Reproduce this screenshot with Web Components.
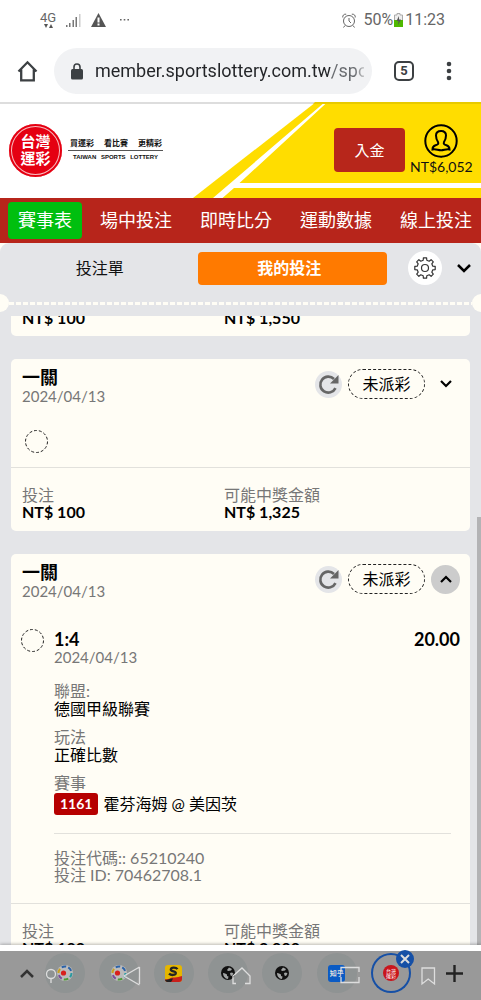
<!DOCTYPE html>
<html lang="zh-Hant">
<head>
<meta charset="utf-8">
<meta name="viewport" content="width=device-width, initial-scale=1">
<title>台灣運彩</title>
<style>
html, body { margin: 0; height: 100%; }
body { font: 16px/17px Lato, "Noto Sans CJK TC", sans-serif; color: #000; background: #fff; }
</style>
</head>
<body>
<lottery-app></lottery-app>

<template id="t-app">
<style>
:host { display: flex; flex-direction: column; height: 100vh; overflow: hidden; }
main { flex: 1; min-height: 0; display: flex; flex-direction: column; position: relative; background: #e4e5e8; }
.list { flex: 1; min-height: 0; overflow: hidden; padding: 0 11px; }
.stack { display: flex; flex-direction: column; gap: 23px; margin-top: -7px; }
.scroll { position: absolute; right: 0; top: 32%; bottom: 0; width: 4px; background: #b3b3b5; }
</style>
<status-bar></status-bar>
<browser-bar></browser-bar>
<site-header></site-header>
<site-nav></site-nav>
<slip-tabs></slip-tabs>
<main>
  <div class="list"><div class="stack">
    <bet-card><bet-amounts slot="foot" stake="NT$ 100" win="NT$ 1,550" bare></bet-amounts></bet-card>
    <bet-card heading="一關" date="2024/04/13">
      <bet-ring style="margin:24px 14px 14px"></bet-ring>
      <bet-amounts slot="foot" stake="NT$ 100" win="NT$ 1,325"></bet-amounts>
    </bet-card>
    <bet-card heading="一關" date="2024/04/13" open>
      <bet-leg></bet-leg>
      <bet-amounts slot="foot" stake="NT$ 100" win="NT$ 2,000"></bet-amounts>
    </bet-card>
  </div></div>
  <div class="scroll"></div>
</main>
<tab-strip></tab-strip>
</template>

<template id="t-status">
<style>
:host { display: flex; align-items: center; justify-content: space-between; height: 40px; padding: 0 36px 0 40px; font: 16px/20px Roboto, sans-serif; color: #666; }
div { display: flex; align-items: center; }
.l { gap: 10px; } .g { font-size: 13px; line-height: 12px; display: grid; justify-items: center; }
svg { display: block; }
</style>
<div class="l">
  <span class="g">4G<svg width="9" height="4" viewBox="0 0 9 4" fill="#555"><path d="M0 0h4L2 4zM5 4h4L7 0z"/></svg></span>
  <svg width="15" height="13" viewBox="0 0 15 13" fill="#777"><path d="M0 11h1.500v2H0zM3 9h1.500v4H3zM6.500 6H8v7H6.500zM9.500 3H11v10H9.500z"/><path d="M13 0h1.500v13H13z" fill="#ccc"/></svg>
  <svg width="15" height="14" viewBox="0 0 15 14"><path d="M7.500 0L15 14H0z" fill="#555"/><path d="M6.500 4.500h2v5h-2zM6.500 10.500h2v2h-2z" fill="#fff"/></svg>
  <svg style="margin-left:4px" width="9" height="2" viewBox="0 0 9 2" fill="#666"><path d="M0 0h1.600v1.600H0zM3.700 0h1.600v1.600H3.700zM7.400 0H9v1.600H7.400z"/></svg>
</div>
<div>
  <svg style="margin-right:7px" width="14" height="15" viewBox="0 0 14 15" fill="none" stroke="#666" stroke-width="1"><circle cx="7" cy="8" r="5.500"/><path d="M7 5v3l2 2M.8 4.500C.3 2.500 2 .8 4.200 1.200M13.200 4.500C13.700 2.500 12 .8 9.800 1.200M3 12.500L1.500 14.500M11 12.500l1.500 2"/></svg>
  <span>50%</span>
  <svg style="margin:0 2px 0 1px" width="9" height="14" viewBox="0 0 9 14"><path d="M.5 2h2.500V.5h3V2h2.500v11.500h-8z" fill="#eee" stroke="#aaa"/><path d="M0 7h9v7H0z" fill="#4fb800"/><path d="M5 3L2.500 8h2L4 12l3-5.500H5z" fill="#555"/></svg>
  <span>11:23</span>
</div>
</template>

<template id="t-browser">
<style>
:host { display: flex; align-items: center; height: 62px; padding: 0 28px 0 17px; box-sizing: border-box; }
button { border: 0; background: none; padding: 0; display: grid; place-items: center; cursor: pointer; }
label { flex: 1; min-width: 0; height: 46px; border-radius: 23px; background: #f1f2f4; display: flex; align-items: center; gap: 12px; padding: 0 8px 0 17px; box-sizing: border-box; margin-left: 16px; }
input { flex: 1; min-width: 0; border: 0; outline: 0; padding: 0; height: 26px; font: 18px/26px Roboto, sans-serif;
  color: transparent; background: linear-gradient(90deg, #222427 237px, #66696d 237px, #66696d calc(100% - 10px), #c5c6c8) text; -webkit-background-clip: text; text-overflow: clip; }
.n { margin-left: 22px; width: 20px; height: 20px; box-sizing: border-box; border: 2px solid #3c4043; border-radius: 5px; font: bold 13px/16px Roboto, sans-serif; color: #3c4043; }
.m { margin-left: 31px; width: 8px; }
.h { width: 21px; }
</style>
<button class="h" aria-label="Home"><svg width="21" height="22" viewBox="0 0 21 22" fill="none" stroke="#3c4043" stroke-width="2.300"><path d="M1.500 11.500L10.500 2.300l9 9.200M4.200 9.500v10.800h12.600V9.500"/></svg></button>
<label><svg width="12" height="17" viewBox="0 0 12 17"><rect y="6" width="12" height="10.500" rx="1.500" fill="#3c4043"/><path d="M3 7V4a3 3 0 0 1 6 0v3" fill="none" stroke="#3c4043" stroke-width="1.600"/></svg>
<input aria-label="網址" value="member.sportslottery.com.tw/sports"></label>
<button class="n">5</button>
<button class="m" aria-label="Menu"><svg width="6" height="20" viewBox="0 0 6 20" fill="#3c4043"><circle cx="3" cy="3" r="2.300"/><circle cx="3" cy="10" r="2.300"/><circle cx="3" cy="17" r="2.300"/></svg></button>
</template>

<template id="t-header">
<style>
:host { display: grid; height: 96px; background: #fff; color: #111; }
.bg, .row { grid-area: 1 / 1; min-width: 0; }
.bg { width: 100%; height: 96px; display: block; }
.row { display: flex; align-items: center; padding: 0 9px; z-index: 1; }
.logo { width: 53px; height: 53px; border-radius: 50%; background: #e50012; color: #fff; display: grid; place-content: center; font-weight: bold; font-size: 15px; line-height: 17px; box-shadow: inset 0 0 0 2px #e50012, inset 0 0 0 3px #fffb; text-decoration: none; }
.logo span { display: block; }
.words { margin-left: 6px; width: 95px; display: grid; align-self: start; margin-top: 34px; }
.zh, .en { display: flex; justify-content: space-between; }
.zh { font: bold 8px/14px "Noto Sans CJK TC", sans-serif; padding: 0 1px 0 2px; border-bottom: 1px solid #555; }
.en { font: 6px/12px "Liberation Sans", sans-serif; padding: 0 5px; color: #111; -webkit-text-stroke: 0; font-weight: bold; }
.pay { margin-left: auto; width: 71px; height: 44px; border: 0; border-radius: 4px; background: #b7261b; color: #fff; font: 15px/20px Lato, "Noto Sans CJK TC", sans-serif; padding: 0; }
.user { margin-left: 5px; border: 0; background: none; padding: 0; display: grid; justify-items: center; font: 14px/18px Lato, sans-serif; color: #111; width: 62px; }
</style>
<svg class="bg" viewBox="0 0 481 96" preserveAspectRatio="xMaxYMid slice"><path d="M316 0H481V96H193z" fill="#fd0"/><path d="M325 0h2.500L239.500 81H481v5H234L222.500 96H213z" fill="#fff"/><path d="M0 0h316v2H0z" fill="#ddd"/><path d="M315 0h166v2H313z" fill="#e8ca00"/></svg>
<div class="row">
  <a class="logo" href="#" aria-label="台灣運彩"><span>台灣</span><span>運彩</span></a>
  <div class="words"><div class="zh"><span>買運彩</span><span>看比賽</span><span>更精彩</span></div><div class="en"><span>TAIWAN</span><span>SPORTS</span><span>LOTTERY</span></div></div>
  <button class="pay">入金</button>
  <button class="user"><svg width="34" height="34" viewBox="0 0 34 34" fill="none" stroke="#000" stroke-width="2"><circle cx="17" cy="17" r="15.700"/><path d="M12 11.500C12 8.500 14 7 17 7s5 1.500 5 4.500c0 3.500-1 5-2 6.500-.8 2 .3 2.600 2.500 3.300 2.300.8 3 1.700 3 4.200-3-.8-5.500.8-8.500.8s-5.500-1.600-8.500-.8c0-2.500.7-3.400 3-4.200 2.200-.7 3.300-1.300 2.500-3.300-1-1.500-2-3-2-6.500z"/></svg>NT$6,052</button>
</div>
</template>

<template id="t-nav">
<style>
:host { display: block; background: #b7251b; }
nav { display: flex; gap: 8px; padding: 4px 8px; height: 37px; overflow: hidden; }
a { flex: none; padding: 0 10px; font-size: 18px; line-height: 37px; color: #fff; text-decoration: none; border-radius: 4px; }
.on { background: #00bf0f; }
</style>
<nav><a class="on" href="#">賽事表</a><a href="#">場中投注</a><a href="#">即時比分</a><a href="#">運動數據</a><a href="#">線上投注</a></nav>
</template>

<template id="t-tabs">
<style>
:host { display: block; background: #fffdf5; }
.panel { background: #e4e5e8; border-radius: 9px 9px 0 0; overflow: hidden; height: 73px; display: flex; flex-direction: column; justify-content: space-between; box-sizing: border-box; padding: 8px 0 4px; }
.row { display: flex; align-items: center; padding: 0 8px; }
button { border: 0; background: none; padding: 0; font: 16px/20px Lato, "Noto Sans CJK TC", sans-serif; color: #111; display: grid; place-items: center; box-sizing: border-box; }
.t { flex: 1; height: 33px; border-radius: 4px; padding-right: 6px; }
.on { background: #ff7a00; color: #fff; font-weight: bold; }
.gear { width: 34px; height: 34px; border-radius: 50%; background: #fff; margin-left: 21px; }
.dn { width: 20px; height: 20px; margin: 0 -1px 0 12px; }
.perf { display: flex; align-items: center; }
i { width: 9px; height: 18px; background: #fffdf5; border-radius: 0 9px 9px 0; }
i:last-child { border-radius: 9px 0 0 9px; }
.dash { flex: 1; height: 3px; background: repeating-linear-gradient(90deg, #fffdf5 0 5px, transparent 5px 7px); }
</style>
<div class="panel">
<div class="row"><button class="t">投注單</button><button class="t on">我的投注</button>
<button class="gear" aria-label="設定"><svg width="22" height="22" viewBox="0 0 22 22" fill="none" stroke="#333" stroke-width="1.200" stroke-linejoin="round"><circle cx="11" cy="11" r="3.500"/><path class="cog"/></svg></button>
<button class="dn" aria-label="收合"><svg width="14" height="9" viewBox="0 0 14 9" fill="none" stroke="#000" stroke-width="2.500"><path d="M1 1l6 6 6-6"/></svg></button></div>
<div class="perf"><i></i><div class="dash"></div><i></i></div>
</div>
</template>

<template id="t-card">
<style>
:host { display: block; background: #fffdf5; border-radius: 5px; }
header { display: flex; align-items: flex-start; justify-content: space-between; padding: 7px 10px 2px 11px; }
h2 { margin: 0; font-size: 18px; line-height: 22px; }
p { margin: 0; color: #777; font-size: 15px; line-height: 16px; }
.act { display: flex; align-items: center; margin: 3px 0 -1px; gap: 6px; }
button { border: 0; padding: 0; background: none; border-radius: 50%; display: grid; place-items: center; }
.re { width: 27px; height: 27px; background: #e4e5e8; }
.pill { width: 77px; height: 30px; box-sizing: border-box; border: 1px dashed #222; border-radius: 15px; text-align: center; line-height: 28px; }
.tg { width: 29px; height: 29px; }
:host([open]) .tg { background: #ccc; }
:host([open]) .tg svg { transform: rotate(180deg); }
:host(:not([heading])) header { display: none; }
</style>
<header><div><h2></h2><p></p></div>
<div class="act"><button class="re" aria-label="更新"><svg width="21" height="21" viewBox="0 0 21 21"><path d="M17.500 14.200A8 8 0 1 1 16 5" fill="none" stroke="#666" stroke-width="2.600"/><path d="M20.500 1v8.500H12z" fill="#666"/></svg></button>
<span class="pill">未派彩</span>
<button class="tg" aria-label="展開"><svg width="12" height="8" viewBox="0 0 12 8" fill="none" stroke="#000" stroke-width="2.200"><path d="M1 1l5 5 5-5"/></svg></button></div></header>
<slot></slot><slot name="foot"></slot>
</template>

<template id="t-ring"><style>:host { display: block; flex: none; width: 23px; height: 23px; } svg { display: block; }</style>
<svg width="23" height="23" viewBox="0 0 23 23"><circle cx="11.500" cy="11.500" r="11" fill="none" stroke="#222" stroke-dasharray="3 1.900"/></svg></template>

<template id="t-amounts">
<style>
:host { display: grid; grid-template-columns: 202px 1fr; padding: 18px 11px 11px; border-top: 1px solid #e2e1dc; }
:host([bare]) { padding-top: 0; border: 0; padding-bottom: 10px; } :host([bare]) span { display: none; }
div { display: grid; } span { color: #777; }
</style>
<div><span>投注</span><b class="s"></b></div><div><span>可能中獎金額</span><b class="w"></b></div>
</template>

<template id="t-leg">
<style>
:host { display: flex; gap: 10px; padding: 28px 10px 20px; }
.b { flex: 1; }
.top { display: flex; justify-content: space-between; font-weight: bold; font-size: 18px; line-height: 20px; }
.g { color: #777; }
.date { font-size: 15px; }
dl { margin: 16px 0 0; line-height: 18px; }
dt { color: #777; } dd { margin: 0 0 10px; }
.m { display: flex; align-items: center; gap: 5px; margin: 0; height: 24px; }
.m b { background: #b60000; color: #fff; border-radius: 3px; font-size: 14px; line-height: 22px; padding: 0 6px; }
.line { border-top: 1px solid #e2e1dc; margin: 17px 9px 15px 0; }
</style>
<bet-ring></bet-ring>
<div class="b"><div class="top"><span>1:4</span><span>20.00</span></div><div class="g date">2024/04/13</div>
<dl><dt>聯盟:</dt><dd>德國甲級聯賽</dd><dt>玩法</dt><dd>正確比數</dd><dt>賽事</dt><dd class="m"><b>1161</b><span>霍芬海姆 @ 美因茨</span></dd></dl>
<div class="line"></div>
<div class="g">投注代碼:: 65210240<br>投注 ID: 70462708.1</div></div>
</template>

<template id="t-strip">
<style>
:host { display: flex; flex: none; align-items: center; position: relative; height: 49px; border-top: 6px solid #fff; background: #999; padding: 0 18px 0 19px; z-index: 1; box-shadow: 0 -1px 3px #0004; }
button { border: 0; background: none; padding: 0; display: grid; place-items: center; flex: none; position: relative; }
.up { width: 16px; height: 16px; margin-bottom: 4px; }
.plus { margin-bottom: 4px; }
.tabs { flex: 1; display: flex; justify-content: space-between; margin: 0 35px 0 10px; align-items: center; }
.t { width: 40px; height: 40px; border-radius: 50%; background: #8f9393; margin-bottom: 5px; }
.cur { background: none; box-shadow: inset 0 0 0 2px #1650a6; }
.z { background: #0a5bc4; color: #ddd; width: 17px; height: 17px; border-radius: 3px; font: bold 7px/17px "Noto Sans CJK TC", sans-serif; }
.k { background: #c9151c; color: #fff; width: 16px; height: 16px; border-radius: 50%; font: 5px/5px "Noto Sans CJK TC", sans-serif; display: grid; place-content: center; }
.x { position: absolute; right: -3px; top: -3px; }
.ghost { position: absolute; inset: 0; width: 100%; height: 49px; pointer-events: none; }
</style>
<button class="up" aria-label="展開分頁"><svg width="14" height="9" viewBox="0 0 14 9" fill="none" stroke="#333" stroke-width="2.500"><path d="M1 8l6-6 6 6"/></svg></button>
<div class="tabs">
<button class="t" aria-label="分頁 1"><svg class="ball" width="16" height="16" viewBox="0 0 16 16"></svg></button>
<button class="t" aria-label="分頁 2"><svg class="ball" width="16" height="16" viewBox="0 0 16 16"></svg></button>
<button class="t" aria-label="分頁 3"><svg width="17" height="17" viewBox="0 0 17 17"><rect width="17" height="17" rx="3" fill="#e5b600"/><path d="M0 14c4 1 5-2 9-1.500 3 .3 5-1 8-1.500v3a3 3 0 0 1-3 3H3a3 3 0 0 1-3-3z" fill="#c8201c"/><path d="M0 15c4 0 5-2 8-1.500-1 2-1 2.500-2 3.500H3a3 3 0 0 1-3-2z" fill="#222"/><path d="M12.500 4.200C11 2 6 2 5.800 4.500 5.700 7 11 5.800 10.800 8.200 10.500 10.500 6 10.500 4 8.600" fill="none" stroke="#222" stroke-width="2.300"/></svg></button>
<button class="t" aria-label="分頁 4"><svg class="globe" width="14" height="14" viewBox="0 0 14 14"></svg></button>
<button class="t" aria-label="分頁 5"><svg class="globe" width="14" height="14" viewBox="0 0 14 14"></svg></button>
<button class="t"><span class="z">知乎</span></button>
<button class="t cur"><span class="k">台灣<br>運彩</span><svg class="x" width="18" height="18" viewBox="0 0 18 18"><circle cx="9" cy="9" r="9" fill="#1650a6"/><path d="M5 5l8 8M13 5l-8 8" stroke="#ddd" stroke-width="2"/></svg></button>
</div>
<button class="plus" aria-label="新分頁"><svg width="17" height="17" viewBox="0 0 17 17"><path d="M8.500 0v17M0 8.500h17" stroke="#222" stroke-width="2.400"/></svg></button>
<svg class="ghost" viewBox="0 0 481 49" fill="none" stroke="#ddd" stroke-width="1.300"><circle cx="51" cy="23" r="4.500"/><path d="M51 27.500V32M139.500 16v17M139.500 16L124 25l15.500 9M236 32.500h-3V25L242 17l8 8v7.500h-5M359 21v-4.500h-18V21M341 26v5.500h18V26M422 17h12.500v16l-6.300-5-6.200 5z"/></svg>
</template>

<script>
const base = (id) => class extends HTMLElement {
  constructor() {
    super();
    this.attachShadow({ mode: "open" }).append(document.getElementById(id).content.cloneNode(true));
  }
  put(sel, attr) {
    this.shadowRoot.querySelector(sel).textContent = this.getAttribute(attr) || "";
  }
};
// Outline of an eight-toothed cog, centred in a 22 x 22 box
const cogPath = () => {
  const pts = [];
  for (let i = 0; i < 8; i++) {
    for (const [deg, r] of [[-13, 8], [-9, 10.3], [9, 10.3], [13, 8]]) {
      const a = (i * 45 + deg) * Math.PI / 180;
      pts.push((11 + r * Math.cos(a)).toFixed(1) + " " + (11 + r * Math.sin(a)).toFixed(1));
    }
  }
  return "M" + pts.join("L") + "z";
};
customElements.define("status-bar", class extends base("t-status") {});
customElements.define("browser-bar", class extends base("t-browser") {});
customElements.define("site-header", class extends base("t-header") {});
customElements.define("site-nav", class extends base("t-nav") {});
customElements.define("slip-tabs", class extends base("t-tabs") {
  connectedCallback() { this.shadowRoot.querySelector(".cog").setAttribute("d", cogPath()); }
});
customElements.define("bet-ring", class extends base("t-ring") {});
customElements.define("bet-card", class extends base("t-card") {
  connectedCallback() { this.put("h2", "heading"); this.put("p", "date"); }
});
customElements.define("bet-amounts", class extends base("t-amounts") {
  connectedCallback() { this.put(".s", "stake"); this.put(".w", "win"); }
});
customElements.define("bet-leg", class extends base("t-leg") {});
customElements.define("tab-strip", class extends base("t-strip") {
  connectedCallback() {
    const colours = ["#2b9aa0", "#4f9a38", "#7a4c9a", "#c8a020", "#2a62a8", "#2a62a8"];
    const arcs = colours.map((c, i) => `<circle cx="8" cy="8" r="6.500" fill="none" stroke="${c}" stroke-width="2" stroke-dasharray="4.500 60" transform="rotate(${i * 60} 8 8)"/>`).join("");
    const ball = `<circle cx="8" cy="8" r="8" fill="#bbb"/>${arcs}<circle cx="6.500" cy="8" r="2.600" fill="#d8201c"/>`;
    const globe = '<circle cx="7" cy="7" r="7" fill="#111"/><path d="M2 7c2 0 2.500 1 4 1.500L6 10l1.500.5L7 13C4 12.800 2 10 2 7zM8 1.500l3 1.500-1 1.500-3 .5L6 4zM9 7l2-.5 1.500 1L11 10l-1.500-.5z" fill="#a2a5a5"/>';
    this.shadowRoot.querySelectorAll(".ball").forEach((s) => { s.innerHTML = ball; });
    this.shadowRoot.querySelectorAll(".globe").forEach((s) => { s.innerHTML = globe; });
  }
});
customElements.define("lottery-app", class extends base("t-app") {});
</script>
</body>
</html>
